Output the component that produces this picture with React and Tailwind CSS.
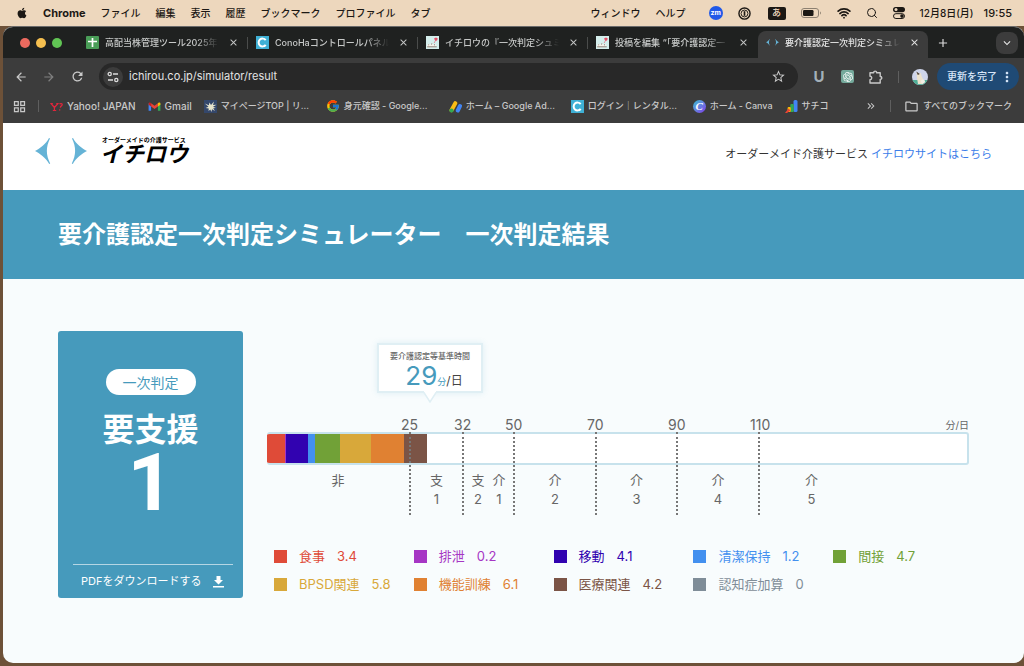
import React from 'react';
import { Search, Wifi } from 'lucide-react';
import { FaApple } from 'react-icons/fa';
import { FcGoogle } from 'react-icons/fc';
import { SiOpenai } from 'react-icons/si';
import {
    MdAdd,
    MdArrowBack,
    MdArrowForward,
    MdClose,
    MdKeyboardArrowDown,
    MdKeyboardDoubleArrowRight,
    MdMoreVert,
    MdOutlineFolder,
    MdOutlineGridView,
    MdRefresh,
    MdStarBorder,
} from 'react-icons/md';

const menus = ['ファイル', '編集', '表示', '履歴', 'ブックマーク', 'プロファイル', 'タブ'];

const categories = [
    { name: '食事', value: 3.4, bg: 'bg-[#df4b38]', text: 'text-[#df4b38]' },
    { name: '排泄', value: 0.2, bg: 'bg-[#a636c4]', text: 'text-[#a636c4]' },
    { name: '移動', value: 4.1, bg: 'bg-[#3102b0]', text: 'text-[#3102b0]' },
    { name: '清潔保持', value: 1.2, bg: 'bg-[#4390ef]', text: 'text-[#4390ef]' },
    { name: '間接', value: 4.7, bg: 'bg-[#71a137]', text: 'text-[#71a137]' },
    { name: 'BPSD関連', value: 5.8, bg: 'bg-[#d8a83a]', text: 'text-[#d8a83a]' },
    { name: '機能訓練', value: 6.1, bg: 'bg-[#e08132]', text: 'text-[#e08132]' },
    { name: '医療関連', value: 4.2, bg: 'bg-[#7b5446]', text: 'text-[#7b5446]' },
    { name: '認知症加算', value: 0, bg: 'bg-[#7f8d98]', text: 'text-[#7f8d98]' },
];

const MAX_MINUTES = 130;

const ranges = [
    { from: null, levels: [['非']] },
    { from: 25, levels: [['支', 1]] },
    { from: 32, levels: [['支', 2], ['介', 1]] },
    { from: 50, levels: [['介', 2]] },
    { from: 70, levels: [['介', 3]] },
    { from: 90, levels: [['介', 4]] },
    { from: 110, levels: [['介', 5]] },
];

const SheetsIcon = () => (
    <svg viewBox="0 0 13 13" className="size-[13px] shrink-0">
        <rect width="13" height="13" rx="1" fill="#4a9e58" />
        <path d="M6.5 2v9M2 5.5h9" stroke="#fff" strokeWidth="1.7" />
    </svg>
);

const ConohaIcon = () => (
    <svg viewBox="0 0 13 13" className="size-[13px] shrink-0">
        <rect width="13" height="13" fill="#3fb0d5" />
        <path d="M9.7 4.2A3.9 3.9 0 1 0 9.7 8.8" fill="none" stroke="#fff" strokeWidth="2" />
    </svg>
);

const BlogIcon = () => (
    <svg viewBox="0 0 13 13" className="size-[13px] shrink-0">
        <rect width="13" height="13" fill="#d5efed" />
        <path d="M1 9.5c1-2 2.2-1.8 3-.8 1-1.6 2.4-1.6 3.2 0 1-1 2.4-.8 3.3.8l-1 2H1.5z" fill="#f7f3ec" />
        <path d="M1.2 10.8h9.5M2.3 9l.8-.6M5 8.2l1.2-.4M8 8.7l1 .2" stroke="#6c6258" strokeWidth=".8" />
        <path d="M8 2.6 10 1.4l1.8 1L11 4.6 9.4 5z" fill="#e5526b" />
        <path d="M9.3 4.8 8.2 7" stroke="#e5526b" strokeWidth=".6" />
    </svg>
);

const ArrowsIcon = ({ className }) => (
    <svg viewBox="0 0 52 26" className={className} fill="#65b3d6">
        <path d="M0 13C5 10.500 11 6 14 0l1 .5C10.800 9 10.800 17 15.200 25.500l-1 .5C11 20 5 15.500 0 13z" />
        <path d="M52 13C47 10.500 41 6 38 0l-1 .5C41.200 9 41.200 17 36.800 25.500l1 .5C41 20 47 15.500 52 13z" />
    </svg>
);

const YahooIcon = () => (
    <svg viewBox="0 0 13 13" className="size-[13px] shrink-0" stroke="#e0263c" fill="none">
        <path d="m1 3.500 3.400 4M8 3.500 4.400 7.500v3M2.800 10.500h3.400M.3 3.500h2.500M6.300 3.500h2.400" strokeWidth="1.200" />
        <path d="M9.500 4.200c.8-1 2.800-.8 2.700.6-.1 1-1.700 1.200-1.900 2.900M9.800 9.300l-.2 1.200" strokeWidth="1.300" />
    </svg>
);

const GmailIcon = () => (
    <svg viewBox="0 0 13 13" className="size-[13px] shrink-0">
        <path d="M.6 3.200v7.600h2.500V5.200z" fill="#4285f4" />
        <path d="M12.400 3.200v7.600H9.900V5.200z" fill="#34a853" />
        <path d="m3.100 3.200 3.400 2.600 3.400-2.600v3.300L6.500 9.100 3.100 6.500z" fill="#ea4335" />
        <path d="M.6 3.700c0-1.400 1.300-1.600 2.500-.7v3.500L.6 4.700z" fill="#c5221f" />
        <path d="M12.400 3.700c0-1.400-1.300-1.600-2.500-.7v3.500l2.500-1.800z" fill="#fbbc04" />
    </svg>
);

const RinkerIcon = () => (
    <svg viewBox="0 0 13 13" className="size-[13px] shrink-0">
        <rect width="13" height="13" fill="#34476b" />
        <path d="M5.500 2.500 7 5l3-3.500L9 5l3.500-.3L9 6.800l3 1.200-2.800.3L11 11 8 9.300 7.500 12 6.300 9.500 4.500 11l.3-2.500L1.500 8l3-1.200L.8 3.500l4 1.800z" fill="#e6e3cb" />
    </svg>
);

const AdsIcon = () => (
    <svg viewBox="0 0 13 13" className="size-[13px] shrink-0" strokeLinecap="round">
        <path d="m6.300 3.200-3.800 7" stroke="#f9bc15" strokeWidth="4" />
        <path d="m11 6-2.200 4.500" stroke="#4285f4" strokeWidth="4" />
        <circle cx="2.500" cy="10.500" r="2.100" fill="#34a853" />
    </svg>
);

const CanvaIcon = () => (
    <span className="flex size-[13px] shrink-0 items-center justify-center rounded-full bg-linear-to-br from-[#19bcd0] to-[#7a2be8] font-['Liberation_Serif',serif] text-[11px] leading-none font-bold text-white italic">
        C
    </span>
);

const SearchConsoleIcon = () => (
    <svg viewBox="0 0 13 13" className="size-[13px] shrink-0">
        <rect x="8.500" y="0" width="4" height="12" rx="1.500" fill="#4285f4" />
        <rect x="5.300" y="4" width="3.500" height="8" rx="1" fill="#34a853" />
        <rect x="2.600" y="7" width="3.200" height="5" rx="1" fill="#fbbc04" />
        <path d="m0 13 3.500-4.500 2 2L2 13z" fill="#ea4335" />
    </svg>
);

const ExtensionIcon = () => (
    <svg viewBox="0 0 14 14" className="size-[14px]" fill="none" stroke="currentColor" strokeWidth="1.400" strokeLinejoin="round">
        <path d="M1 2.800h3.700c0-2.200 2.900-2.200 2.900 0h3.600v3.700c2.200 0 2.200 2.900 0 2.900V13H1V9.600c2.300 0 2.300-3.400 0-3.400z" />
    </svg>
);

const DownloadIcon = () => (
    <svg viewBox="0 0 11 12" className="h-3 w-[11px]" fill="currentColor">
        <path d="M3.500 0h4v4H10L5.500 8.500 1 4h2.500zM0 10h11v1.500H0z" />
    </svg>
);

const tabs = [
    { title: '高配当株管理ツール2025年', icon: <SheetsIcon /> },
    { title: 'ConoHaコントロールパネル', icon: <ConohaIcon /> },
    { title: 'イチロウの『一次判定シュミ', icon: <BlogIcon /> },
    { title: '投稿を編集 “「要介護認定一', icon: <BlogIcon /> },
    { title: '要介護認定一次判定シミュレ', icon: <ArrowsIcon className="w-[13px] shrink-0" />, active: true },
];

const bookmarks = [
    { label: 'Yahoo! JAPAN', icon: <YahooIcon />, size: 'text-[10px]' },
    { label: 'Gmail', icon: <GmailIcon />, size: 'text-[10px]' },
    { label: 'マイページTOP | リ...', icon: <RinkerIcon />, size: 'w-[93px] text-[9px]' },
    { label: '身元確認 - Google...', icon: <FcGoogle className="size-[14px] shrink-0" />, size: 'w-[93px] text-[9px]' },
    { label: 'ホーム – Google Ad...', icon: <AdsIcon />, size: 'w-[93px] text-[9px]' },
    { label: 'ログイン｜レンタル...', icon: <ConohaIcon />, size: 'w-[93px] text-[9px]' },
    { label: 'ホーム - Canva', icon: <CanvaIcon />, size: 'text-[9px]' },
    { label: 'サチコ', icon: <SearchConsoleIcon />, size: 'text-[9px]' },
];

const MenuBar = () => (
    <div className="flex h-[26px] shrink-0 items-center justify-between bg-[#edd7bd] pr-3 pl-4 text-[10px] font-medium whitespace-nowrap text-[#1c1814]">
        <div className="flex items-center gap-[15px]">
            <FaApple className="size-3" />
            <span className="text-[11px] font-bold">Chrome</span>
            {menus.map((menu) => (
                <span key={menu}>{menu}</span>
            ))}
        </div>
        <div className="flex items-center gap-[15px]">
            <span>ウィンドウ</span>
            <span>ヘルプ</span>
            <span className="ml-2 flex size-[14px] items-center justify-center rounded-full bg-[#2159e8] text-[7px] font-bold text-white">zm</span>
            <svg viewBox="0 0 14 14" className="size-[13px]" fill="none" stroke="currentColor">
                <circle cx="7" cy="7" r="6" strokeWidth="1.500" />
                <circle cx="7" cy="7" r="3.700" strokeWidth="1" />
                <path d="M7 4.500v5" strokeWidth="1.800" />
            </svg>
            <span className="ml-0.5 flex h-[13px] w-[18px] items-center justify-center rounded-xs bg-[#1c1814] text-[9px] text-[#edd7bd]">あ</span>
            <svg viewBox="0 0 21 11" className="h-[11px] w-[21px]">
                <rect x=".5" y=".5" width="17" height="9" rx="2.500" fill="none" stroke="#8d8071" />
                <rect x="2" y="2" width="10.500" height="6" rx="1.200" fill="#1c1814" />
                <path d="M19 3.500v3c1.200-.4 1.200-2.600 0-3z" fill="#8d8071" />
            </svg>
            <Wifi className="size-[14px]" strokeWidth={3} />
            <Search className="size-[12px]" strokeWidth={2} />
            <svg viewBox="0 0 12 12" className="size-[12px]" fill="currentColor">
                <rect width="12" height="5.200" rx="2.600" />
                <circle cx="3" cy="2.600" r="1.500" fill="#edd7bd" />
                <rect x=".5" y="6.700" width="11" height="4.800" rx="2.400" fill="none" stroke="currentColor" />
                <circle cx="9" cy="9.100" r="1.800" />
            </svg>
            <span className="flex items-center gap-2.5">
                <span>12月8日(月)</span>
                <span className="text-[11px]">19:55</span>
            </span>
        </div>
    </div>
);

const TabStrip = () => (
    <div className="flex h-[31px] items-end bg-[#1f2120] pr-1.5 pl-[17px]">
        <div className="flex h-[31px] w-[58px] items-center gap-1.5">
            <span className="size-[10px] rounded-full bg-[#ec6a5f]" />
            <span className="size-[10px] rounded-full bg-[#f5bf4f]" />
            <span className="size-[10px] rounded-full bg-[#61c554]" />
        </div>
        <div className="grid min-w-0 flex-1 grid-cols-5">
            {tabs.map((tab, i) => (
                <div
                    key={tab.title}
                    className={
                        tab.active
                            ? 'flex h-[27px] min-w-0 items-center gap-1.5 rounded-t-lg bg-[#3c3c3c] pr-1.5 pb-1 pl-2 text-[#e3e3e3]'
                            : 'flex h-[27px] min-w-0 items-center gap-1.5 pb-1 pl-2 text-[#c7c9c8]'
                    }
                >
                    {tab.icon}
                    <span className="min-w-0 flex-1 overflow-hidden mask-r-from-80% text-[9px] font-medium whitespace-nowrap">{tab.title}</span>
                    <button aria-label="タブを閉じる" className="flex size-4 items-center justify-center">
                        <MdClose className="size-[11px]" />
                    </button>
                    {!tab.active && <span className={i < 3 ? 'h-3 w-px bg-[#4a4c4b]' : 'h-3 w-px'} />}
                </div>
            ))}
        </div>
        <div className="flex h-[31px] items-center gap-[46px] pl-2">
            <button aria-label="新しいタブ" className="text-[#dcdcdc]">
                <MdAdd className="size-[14px]" />
            </button>
            <button aria-label="タブを検索" className="flex size-[22px] items-center justify-center rounded-lg bg-[#3c3c3c] text-[#e3e3e3]">
                <MdKeyboardArrowDown className="size-[14px]" />
            </button>
        </div>
    </div>
);

const Toolbar = () => (
    <div className="flex h-[37px] items-center bg-[#3c3c3c] pr-[5px] pl-[11px] text-[#c9c9c9]">
        <div className="flex w-[85px] items-center gap-[14px]">
            <button aria-label="戻る"><MdArrowBack className="size-[14px]" /></button>
            <button aria-label="進む" className="text-[#808080]"><MdArrowForward className="size-[14px]" /></button>
            <button aria-label="再読み込み"><MdRefresh className="size-[15px]" /></button>
        </div>
        <div className="flex h-[27px] min-w-0 flex-1 items-center rounded-full bg-[#282828] pr-3 pl-1">
            <span className="flex size-5 items-center justify-center rounded-full bg-[#3c3c3c]">
                <svg viewBox="0 0 12 12" className="size-3" fill="none" stroke="#dcdcdc" strokeWidth="1.300">
                    <circle cx="2.700" cy="3" r="1.600" />
                    <path d="M6 3h5M1 9h5" />
                    <circle cx="9.300" cy="9" r="1.600" />
                </svg>
            </span>
            <input
                aria-label="アドレス"
                defaultValue="ichirou.co.jp/simulator/result"
                className="min-w-0 flex-1 bg-transparent px-1.5 text-[11px] text-[#e3e3e3] outline-none"
            />
            <button aria-label="ブックマークに追加"><MdStarBorder className="size-[15px]" /></button>
        </div>
        <div className="flex items-center gap-[15px] pr-[9px] pl-[14px]">
            <span className="w-[14px] text-center text-[15px] leading-none font-bold text-[#a3b0b8]">U</span>
            <span className="flex size-[13px] items-center justify-center rounded-xs bg-[#74a99b] text-white">
                <SiOpenai className="size-[10px]" />
            </span>
            <ExtensionIcon />
            <span className="h-3 w-px bg-[#5f5f5f]" />
            <svg viewBox="0 0 16 16" className="-ml-0.5 size-4 rounded-full">
                <rect width="16" height="16" fill="#cfd5ea" />
                <path d="M0 11h16v5H0z" fill="#4fae97" />
                <path d="M4.500 3 7 4.500 9 4l.5 3 2.500 5-1 3H6l-1-6z" fill="#ece2cc" />
                <path d="M4.300 2.500 5.800 6l2-1z" fill="#493e35" />
                <circle cx="11" cy="12.500" r="2" fill="#f1eee6" />
            </svg>
        </div>
        <button className="flex h-[27px] items-center gap-0.5 rounded-full bg-[#1f4a75] pr-1 pl-[10px] text-[10px] font-medium whitespace-nowrap text-[#d7e6f8]">
            更新を完了
            <MdMoreVert className="size-4" />
        </button>
    </div>
);

const BookmarkBar = () => (
    <div className="flex h-7 items-center bg-[#3c3c3c] pr-3 pb-1.5 pl-[9px] font-medium whitespace-nowrap text-[#c9c9c9]">
        <MdOutlineGridView className="size-[15px]" />
        <span className="mr-[11px] ml-[11px] h-3 w-px bg-[#5f5f5f]" />
        <div className="flex flex-1 items-center gap-3">
            {bookmarks.map((b) => (
                <a key={b.label} href="#" className="flex items-center gap-1">
                    {b.icon}
                    <span className={b.size}>{b.label}</span>
                </a>
            ))}
        </div>
        <MdKeyboardDoubleArrowRight className="size-3" />
        <span className="mx-[13px] h-3 w-px bg-[#5f5f5f]" />
        <a href="#" className="flex items-center gap-1 text-[9px]">
            <MdOutlineFolder className="size-[15px]" />
            すべてのブックマーク
        </a>
    </div>
);

const ResultCard = () => (
    <section className="flex h-[267px] w-[185px] shrink-0 flex-col items-center rounded-[3px] bg-[#469abc] pt-[38px] text-white">
        <p className="flex h-[26px] w-[90px] items-center justify-center rounded-full bg-white text-[14px] text-[#469abc]">一次判定</p>
        <p className="mt-4 text-center text-[32px] leading-[38px] font-bold">要支援</p>
        <p className="pt-1 font-[Roboto,sans-serif] text-[80px] leading-[60px] font-bold">1</p>
        <a href="#" className="mt-auto mr-[10px] flex h-[34px] w-[160px] items-center gap-3 self-end border-t border-white/60 pl-2 text-[11px] whitespace-nowrap">
            PDFをダウンロードする
            <DownloadIcon />
        </a>
    </section>
);

const Chart = () => (
    <section className="min-w-0 flex-1 pt-3 text-[#666]">
        <div className="relative ml-[110px] h-[50px] w-[106px] border-2 border-[#e0eff4] bg-white pt-[3px] text-center shadow-[0_0_6px_rgba(70,154,188,0.15)]">
            <p className="text-[8px] leading-4 font-medium">要介護認定等基準時間</p>
            <p className="flex items-baseline justify-center pl-2 text-[12px] leading-[24px] text-[#444]">
                <span className="text-[26px] text-[#469abc]">29</span>
                <span className="text-[9px] text-[#469abc]">分</span>
                <span>/日</span>
            </p>
            <svg viewBox="0 0 16 12" className="absolute top-full left-1/2 h-3 w-4 -translate-x-1/2">
                <path d="M1 0l7 11 7-11" fill="#fff" stroke="#e0eff4" strokeWidth="1.500" />
                <path d="M2 0h12" stroke="#fff" strokeWidth="2" />
            </svg>
        </div>

        <div className="mt-[25px] grid grid-cols-[142fr_53fr_51fr_82fr_81fr_82fr_211fr] text-[14px] leading-[14px]">
            {ranges.map((range, i) => (
                <span key={i} className="-ml-2 flex justify-between">
                    {range.from}
                    {i === ranges.length - 1 && <span className="text-[10px]">分/日</span>}
                </span>
            ))}
        </div>

        {/* bar and range lines share one grid cell */}
        <div className="grid">
            <div className="col-start-1 row-start-1 flex h-[33px] overflow-hidden rounded-[3px] border-2 border-l-0 border-[#c7e2ec] bg-white">
                {categories.map((c) => (
                    <div
                        key={c.name}
                        className={`${c.bg} -my-0.5`}
                        style={{ width: `${(c.value / MAX_MINUTES) * 100}%` }}
                    />
                ))}
            </div>
            <div className="col-start-1 row-start-1 grid h-[83px] grid-cols-[142fr_53fr_51fr_82fr_81fr_82fr_211fr]">
                {ranges.map((range, i) => (
                    <div
                        key={i}
                        className={
                            i === 0
                                ? 'flex justify-center pt-[39px]'
                                : 'flex justify-center gap-2 border-l-2 border-dotted border-[#777] pt-[39px] last:pr-[106px]'
                        }
                    >
                        {range.levels.map(([kind, level]) => (
                            <p key={`${kind}${level}`} className="flex flex-col items-center text-[13px] leading-[19px]">
                                <span>{kind}</span>
                                <span>{level}</span>
                            </p>
                        ))}
                    </div>
                ))}
            </div>
        </div>

        <ul className="mt-[27px] -mr-1 grid grid-cols-5 pl-[7px] text-[13px] leading-7 whitespace-nowrap">
            {categories.map((c) => (
                <li key={c.name} className={`${c.text} flex items-center gap-3`}>
                    <span className={`${c.bg} size-[13px]`} />
                    <span>{c.name}</span>
                    <span>{c.value}</span>
                </li>
            ))}
        </ul>
    </section>
);

export default function App() {
    return (
        <div className="flex min-h-screen flex-col bg-[#6d5138] font-[Inter,'Noto_Sans_CJK_JP',sans-serif]">
            <MenuBar />
            <div className="mb-[3px] ml-[3px] flex flex-1 flex-col overflow-hidden rounded-[10px] border-t border-[#6b6b6b] bg-[#f8fcfd]">
                <TabStrip />
                <Toolbar />
                <BookmarkBar />
                <header className="flex h-[67px] items-center justify-between bg-white pr-8 pb-1 pl-8">
                    <a href="#" className="flex items-center gap-[13px] pb-2">
                        <ArrowsIcon className="w-[52px]" />
                        <span className="flex flex-col font-bold text-black">
                            <span className="pl-0.5 text-[6px] leading-[7px]">オーダーメイドの介護サービス</span>
                            <span className="text-[22px] leading-[22px] italic">イチロウ</span>
                        </span>
                    </a>
                    <p className="text-[11px] text-[#333]">
                        オーダーメイド介護サービス{' '}
                        <a href="#" className="text-[#3b7de9]">イチロウサイトはこちら</a>
                    </p>
                </header>
                <div className="flex h-[89px] items-center bg-[#469abc] px-[55px]">
                    <h1 className="text-[24px] font-bold text-white">要介護認定一次判定シミュレーター　一次判定結果</h1>
                </div>
                <main className="flex gap-6 px-[55px] py-[52px]">
                    <ResultCard />
                    <Chart />
                </main>
            </div>
        </div>
    );
}
